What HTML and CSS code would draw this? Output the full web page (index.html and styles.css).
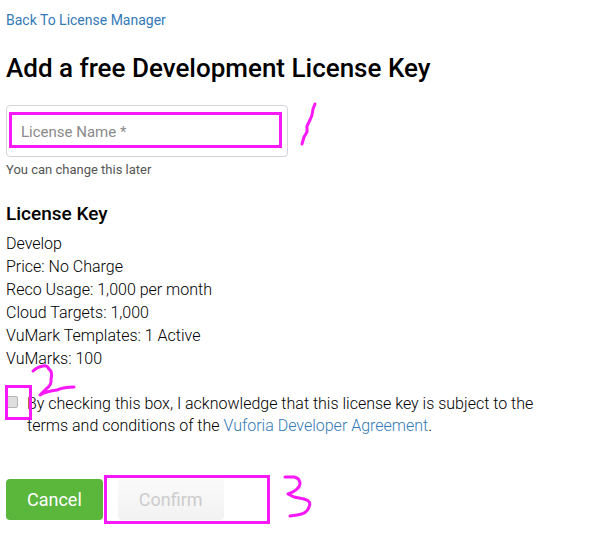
FILE: index.html
```
<!DOCTYPE html>
<html lang="en">
<head>
<meta charset="utf-8">
<meta name="viewport" content="width=device-width, initial-scale=1">
<title>Add a free Development License Key</title>
<link rel="stylesheet" href="styles.css">
</head>
<body>
<main class="page">
  <a class="back" href="#">Back To License Manager</a>
  <h1 class="title">Add a free Development License Key</h1>
  <form class="form">
    <div class="field">
      <input class="name-input" id="license-name" type="text" placeholder="License Name *" aria-label="License Name" aria-describedby="name-help">
      <span class="mark mark-name"></span>
      <svg class="stroke stroke-one" viewBox="0 0 20 50" aria-hidden="true"><path d="M14 4 L12 9 L11 15 L9 20 L6 26 L6 32 L3 37 L1 44"/></svg>
    </div>
    <p class="help" id="name-help">You can change this later</p>
    <h2 class="subtitle">License Key</h2>
    <ul class="details">
      <li>Develop</li>
      <li>Price: No Charge</li>
      <li>Reco Usage: 1,000 per month</li>
      <li>Cloud Targets: 1,000</li>
      <li>VuMark Templates: 1 Active</li>
      <li>VuMarks: 100</li>
    </ul>
    <div class="consent">
      <input class="check" id="agree" type="checkbox">
      <label class="consent-text" for="agree">By checking this box, I acknowledge that this license key is subject to the terms and conditions of the <a href="#">Vuforia Developer Agreement</a>.</label>
      <span class="mark mark-check"></span>
      <svg class="stroke stroke-two" viewBox="0 0 50 36" aria-hidden="true"><path d="M3 7 Q7 3 13 2 Q17 1 19 5 Q23 8 21 15 Q22 21 16 25 L10 31 Q17 27 27 26 Q34 23 44 23"/></svg>
    </div>
    <div class="actions">
      <button class="button cancel" type="button">Cancel</button>
      <button class="button confirm" type="submit" disabled>Confirm</button>
      <span class="mark mark-confirm"></span>
      <svg class="stroke stroke-three" viewBox="0 0 32 46" aria-hidden="true"><path d="M3 4 H12 Q18 5 18 11 Q17 17 6 21 L12 24 L22 26 Q30 28 27 34 Q25 41 15 42 L8 43"/></svg>
    </div>
  </form>
</main>
</body>
</html>
```
FILE: styles.css
```
* {
  box-sizing: border-box;
}

body {
  margin: 0;
  background: #fff;
  color: #000;
  font: 300 16px/23px Roboto, "Liberation Sans", sans-serif;
}

a {
  color: #337ab7;
  text-decoration: none;
}

.page {
  max-width: 560px;
  padding: 10px 6px;
}

.back {
  display: block;
  font-size: 14px;
  font-weight: 400;
  line-height: 20px;
}

.title {
  margin: 22px 0 21px;
  font-size: 26px;
  font-weight: 500;
  line-height: 32px;
}

.field,
.consent,
.actions {
  position: relative;
}

.field {
  width: 282px;
  max-width: 100%;
}

.name-input {
  display: block;
  width: 100%;
  height: 52px;
  padding: 1px 14px 0;
  border: 1px solid #d3d3da;
  border-radius: 4px;
  background: #fff;
  font: inherit;
  font-size: 15px;
  font-weight: 400;
}

.name-input::placeholder {
  color: #8a8a8a;
}

.help {
  margin: 3px 0 22px;
  color: #555;
  font-size: 13px;
  font-weight: 400;
  line-height: 20px;
}

.subtitle {
  margin: 0 0 6px;
  font-size: 19px;
  font-weight: 500;
  line-height: 24px;
}

.details {
  margin: 0 0 23px;
  padding: 0;
  list-style: none;
}

.consent {
  display: flex;
  align-items: flex-start;
  gap: 9px;
  margin-bottom: 42px;
  line-height: 22px;
}

.check {
  flex: none;
  appearance: none;
  width: 12px;
  height: 12px;
  margin: 3px 0 0;
  border: 1px solid #b5b5b5;
  border-radius: 2px;
  background: #dedede;
}

.check:checked {
  background: #337ab7;
}

.actions {
  display: flex;
  gap: 15px;
}

.button {
  height: 41px;
  padding: 0 21px;
  border: 0;
  border-radius: 4px;
  font: inherit;
  font-size: 18px;
  font-weight: 400;
}

.cancel {
  background: #5bb63c;
  color: #fff;
}

.confirm {
  background: linear-gradient(#fafafa, #f2f2f2);
  color: #ccc;
}

.mark {
  position: absolute;
  border: 3px solid #f719f7;
  pointer-events: none;
}

.mark-name {
  inset: 7px 6px 9px 3px;
}

.mark-check {
  top: -8px;
  left: -1px;
  width: 27px;
  height: 35px;
}

.mark-confirm {
  top: -4px;
  left: 98px;
  width: 166px;
  height: 49px;
}

.stroke {
  position: absolute;
  fill: none;
  stroke: #f719f7;
  stroke-width: 3;
  stroke-linecap: round;
  stroke-linejoin: round;
  overflow: visible;
  pointer-events: none;
}

.stroke-one {
  top: -5px;
  left: 295px;
  width: 20px;
  height: 50px;
}

.stroke-two {
  top: -29px;
  left: 24px;
  width: 50px;
  height: 36px;
}

.stroke-three {
  top: -6px;
  left: 276px;
  width: 32px;
  height: 46px;
}
```
